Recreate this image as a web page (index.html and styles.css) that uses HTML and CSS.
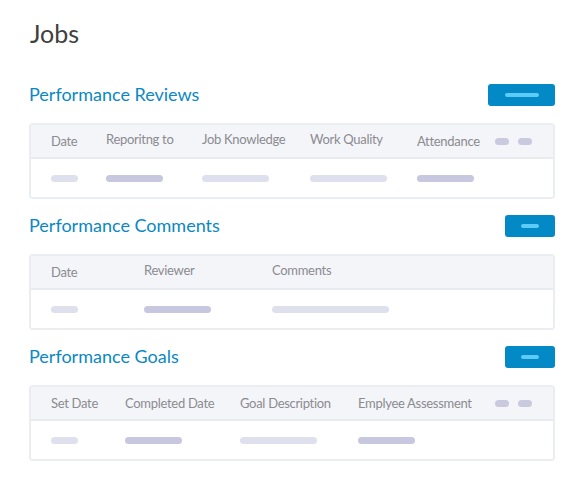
FILE: index.html
```html
<!DOCTYPE html>
<html lang="en">
<head>
<meta charset="utf-8">
<title>Jobs</title>
<link rel="stylesheet" href="styles.css">
</head>
<body>
<div class="page">
  <h1 class="page-title">Jobs</h1>

  <section class="section">
    <div class="section-head">
      <h2 class="section-title">Performance Reviews</h2>
      <button class="btn btn-wide" type="button"><span class="btn-bar"></span></button>
    </div>
    <div class="table">
      <div class="row head cols-reviews">
        <span class="th">Date</span>
        <span class="th up">Reporitng to</span>
        <span class="th up">Job Knowledge</span>
        <span class="th up">Work Quality</span>
        <span class="th">Attendance</span>
        <span class="dots"><i></i><i></i></span>
      </div>
      <div class="row body cols-reviews">
        <span class="pill light w27"></span>
        <span class="pill dark w57"></span>
        <span class="pill light w67"></span>
        <span class="pill light w77"></span>
        <span class="pill dark w57"></span>
      </div>
    </div>
  </section>

  <section class="section">
    <div class="section-head">
      <h2 class="section-title">Performance Comments</h2>
      <button class="btn" type="button"><span class="btn-bar"></span></button>
    </div>
    <div class="table">
      <div class="row head cols-comments">
        <span class="th">Date</span>
        <span class="th up">Reviewer</span>
        <span class="th up">Comments</span>
      </div>
      <div class="row body cols-comments">
        <span class="pill light w27"></span>
        <span class="pill dark w67"></span>
        <span class="pill light w117"></span>
      </div>
    </div>
  </section>

  <section class="section">
    <div class="section-head">
      <h2 class="section-title">Performance Goals</h2>
      <button class="btn" type="button"><span class="btn-bar"></span></button>
    </div>
    <div class="table">
      <div class="row head cols-goals">
        <span class="th">Set Date</span>
        <span class="th">Completed Date</span>
        <span class="th">Goal Description</span>
        <span class="th">Emplyee Assessment</span>
        <span class="dots"><i></i><i></i></span>
      </div>
      <div class="row body cols-goals">
        <span class="pill light w27"></span>
        <span class="pill dark w57"></span>
        <span class="pill light w77"></span>
        <span class="pill dark w57"></span>
      </div>
    </div>
  </section>
</div>
</body>
</html>
```

FILE: styles.css
```css
* { box-sizing: border-box; }

html, body {
  margin: 0;
  padding: 0;
  background: #ffffff;
}

body {
  font-family: Lato, "Open Sans", "Liberation Sans", sans-serif;
}

.page {
  width: 585px;
  padding: 18px 30px 0 29px;
}

.page-title {
  margin: 0;
  font-size: 25px;
  line-height: 31px;
  font-weight: 400;
  color: #404040;
  padding-left: 1px;
}

.section {
  margin-top: 16px;
}

.page-title + .section {
  margin-top: 35px;
}

.section-head {
  display: flex;
  justify-content: space-between;
  align-items: flex-start;
  height: 22px;
}

.section-title {
  margin: 0;
  font-size: 18px;
  line-height: 20px;
  font-weight: 400;
  color: #0a88c3;
}

.btn {
  display: flex;
  align-items: center;
  justify-content: center;
  width: 50px;
  height: 22px;
  padding: 0;
  border: 0;
  border-radius: 3px;
  background: #0289c6;
}

.btn-wide {
  width: 67px;
}

.btn-bar {
  display: block;
  width: 18px;
  height: 4px;
  border-radius: 2px;
  background: #5ccbf6;
}

.btn-wide .btn-bar {
  width: 34px;
}

.table {
  margin-top: 17px;
  border: 2px solid #eaedf2;
  border-radius: 4px;
  overflow: hidden;
}

.row {
  display: grid;
  align-items: center;
  padding-left: 20px;
}

.head {
  height: 34px;
  background: #f4f5f9;
  border-bottom: 2px solid #e7eaef;
}

.body {
  height: 38px;
  background: #ffffff;
}

.cols-reviews { grid-template-columns: 55px 96px 108px 107px 78px 1fr; }
.cols-comments { grid-template-columns: 93px 128px 1fr; }
.cols-goals { grid-template-columns: 74px 115px 118px 137px 1fr; }

.th {
  font-size: 13px;
  line-height: 16px;
  letter-spacing: -0.3px;
  color: #8b8b90;
  white-space: nowrap;
}

.th.up {
  margin-bottom: 4px;
}

.dots {
  display: flex;
  gap: 9px;
}

.dots i {
  display: block;
  width: 14px;
  height: 7px;
  border-radius: 4px;
  background: #c9cadf;
}

.pill {
  display: block;
  height: 7px;
  border-radius: 4px;
}

.pill.light { background: #dfe0ed; }
.pill.dark { background: #c7c8df; }

.w27 { width: 27px; }
.w57 { width: 57px; }
.w67 { width: 67px; }
.w77 { width: 77px; }
.w117 { width: 117px; }
```
